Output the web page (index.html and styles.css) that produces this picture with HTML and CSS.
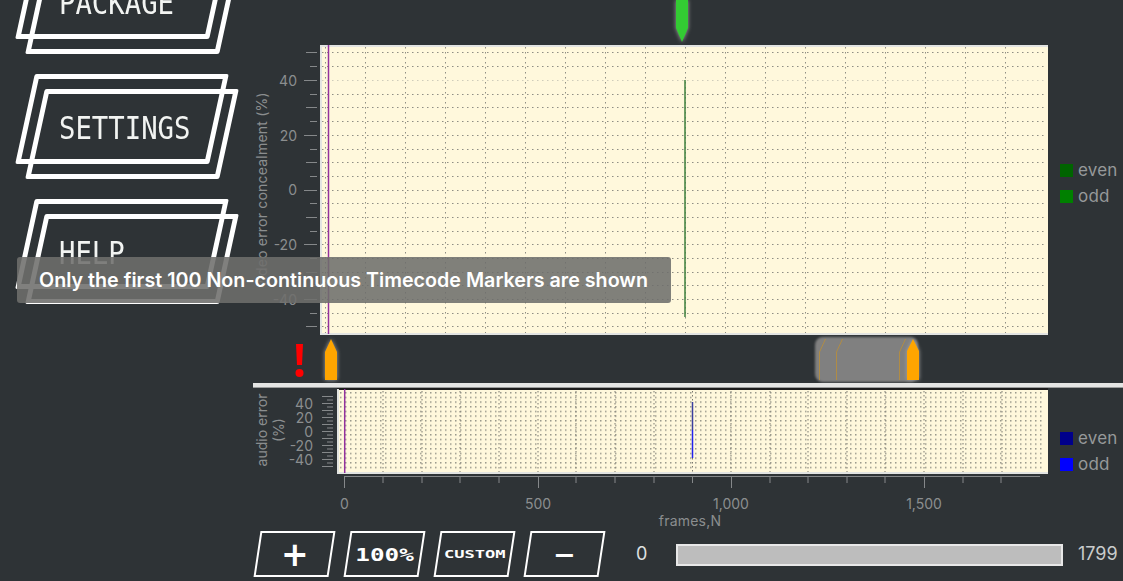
FILE: index.html
```html
<!DOCTYPE html>
<html lang="en">
<head>
    <meta charset="UTF-8">
    <title>Timecode analysis</title>
    <link rel="stylesheet" href="styles.css">
</head>
<body>
<div id="app">
    <div id="sidebar">
        <div class="nav-btn"><div class="frame frame-back"></div><div class="frame frame-front"></div><span class="nav-label">PACKAGE</span></div>
        <div class="nav-btn"><div class="frame frame-back"></div><div class="frame frame-front"></div><span class="nav-label">SETTINGS</span></div>
        <div class="nav-btn"><div class="frame frame-back"></div><div class="frame frame-front"></div><span class="nav-label">HELP</span></div>
    </div>
    <div id="main">
        <svg class="strip-top" viewBox="253 0 870 45" width="870" height="45">
            <polygon class="marker-green" points="676,0 688,0 688,28 682,42 676,28"/>
        </svg>
        <div class="chart-row chart-row-top">
            <svg class="chart" viewBox="253 45 795 290" width="795" height="290">
                <rect class="plot-bg" x="320" y="45" width="728" height="289"/>
                <path class="dots" d="M322 52.5H1044M322 66.5H1044M322 94.5H1044M322 107.5H1044M322 121.5H1044M322 135.5H1044M322 149.5H1044M322 162.5H1044M322 176.5H1044M322 190.5H1044M322 203.5H1044M322 217.5H1044M322 231.5H1044M322 244.5H1044M322 258.5H1044M322 272.5H1044M322 285.5H1044M322 299.5H1044M322 313.5H1044M322 326.5H1044"/>
                <path class="dots dots-light" d="M322 80.5H1044"/>
                <path class="dots" d="M325.5 47V334M365.5 47V334M405.5 47V334M445.5 47V334M485.5 47V334M525.5 47V334M565.5 47V334M605.5 47V334M645.5 47V334M685.5 47V334M725.5 47V334M765.5 47V334M805.5 47V334M845.5 47V334M885.5 47V334M925.5 47V334M965.5 47V334M1005.5 47V334"/>
                <path class="frame-line" d="M321 334V46H1048"/>
                <path class="frame-line" d="M320 334H1048"/>
                <path class="purple" d="M328.5 45V334"/>
                <path class="trace-green" d="M685 80V317"/>
                <path class="tick" d="M304 80.5H317M304 135.5H317M304 190.5H317M304 244.5H317M304 299.5H317M306 52.5H317M306 107.5H317M306 162.5H317M306 217.5H317M306 272.5H317M306 326.5H317M310 66.5H317M310 94.5H317M310 121.5H317M310 149.5H317M310 176.5H317M310 203.5H317M310 231.5H317M310 258.5H317M310 285.5H317M310 313.5H317"/>
                <text class="axis-text" x="297" y="86" text-anchor="end">40</text>
                <text class="axis-text" x="297" y="141" text-anchor="end">20</text>
                <text class="axis-text" x="297" y="195" text-anchor="end">0</text>
                <text class="axis-text" x="297" y="250" text-anchor="end">-20</text>
                <text class="axis-text" x="297" y="305" text-anchor="end">-40</text>
                <text class="axis-text axis-title" text-anchor="middle" transform="translate(267 190) rotate(-90)">video error concealment (%)</text>
            </svg>
            <div class="legend">
                <div class="legend-item"><i class="swatch swatch-even-green"></i>even</div>
                <div class="legend-item"><i class="swatch swatch-odd-green"></i>odd</div>
            </div>
        </div>
        <svg class="strip" viewBox="253 335 870 48" width="870" height="48">
            <polygon class="alert" points="296,344 303,344 302,365 297,365"/>
            <circle class="alert" cx="299.5" cy="373" r="4"/>
            <polygon class="marker-orange" points="325,380 325,352 331,339 337,352 337,380"/>
            <rect class="range" x="815" y="337" width="103" height="45" rx="8"/>
            <path class="range-line" d="M819.5 380V352L825.5 339M836.5 380V352L842.5 339M899.5 380V352L905.5 339"/>
            <polygon class="marker-orange" points="907,380 907,351 913,339 919,351 919,380"/>
        </svg>
        <div class="divider"></div>
        <div class="chart-row">
            <svg class="chart" viewBox="253 388 795 139" width="795" height="139">
                <defs>
                    <pattern id="dense" x="340" y="392" width="5" height="4.67" patternUnits="userSpaceOnUse">
                        <rect class="dense-dot" width="1.5" height="1.5"/>
                    </pattern>
                </defs>
                <rect class="plot-bg" x="337" y="388" width="711" height="85"/>
                <rect fill="url(#dense)" x="339" y="392" width="705" height="78"/>
                <path class="dots dots-dense" d="M383 391V472M422 391V472M460 391V472M499 391V472M538 391V472M576 391V472M615 391V472M654 391V472M692.5 391V402M692.5 458V472M731 391V472M770 391V472M808 391V472M847 391V472M885 391V472M924 391V472M963 391V472M1002 391V472"/>
                <path class="frame-dark" d="M337 389H1048"/>
                <path class="frame-line" d="M338 389V473H1048"/>
                <path class="purple" d="M344.7 389V473"/>
                <path class="trace-navy" d="M692.5 402V430"/>
                <path class="trace-blue" d="M692.5 430V458"/>
                <path class="tick" d="M322 396.5H333M322 403.5H333M322 410.5H333M322 417.5H333M322 424.5H333M322 431.5H333M322 438.5H333M322 445.5H333M322 452.5H333M322 459.5H333M322 466.5H333M327 400H333M327 407H333M327 414H333M327 421H333M327 428H333M327 435H333M327 442H333M327 449H333M327 456H333M327 463H333"/>
                <path class="tick" d="M344 476.5H1040M344.5 476V488M538.5 476V488M731.5 476V488M924.5 476V488M383 476V483M422 476V483M460 476V483M499 476V483M576 476V483M615 476V483M654 476V483M692.5 476V483M770 476V483M808 476V483M847 476V483M885 476V483M963 476V483M1001 476V483"/>
                <text class="axis-text" x="313" y="409" text-anchor="end">40</text>
                <text class="axis-text" x="313" y="423" text-anchor="end">20</text>
                <text class="axis-text" x="313" y="437" text-anchor="end">0</text>
                <text class="axis-text" x="313" y="451" text-anchor="end">-20</text>
                <text class="axis-text" x="313" y="465" text-anchor="end">-40</text>
                <text class="axis-text" text-anchor="middle" transform="translate(267 430) rotate(-90)">audio error</text>
                <text class="axis-text" text-anchor="middle" transform="translate(284 430) rotate(-90)">(%)</text>
                <text class="axis-text" x="344.5" y="509" text-anchor="middle">0</text>
                <text class="axis-text" x="538" y="509" text-anchor="middle">500</text>
                <text class="axis-text" x="731" y="509" text-anchor="middle">1,000</text>
                <text class="axis-text" x="924" y="509" text-anchor="middle">1,500</text>
                <text class="axis-text axis-title" x="690" y="526" text-anchor="middle">frames,N</text>
            </svg>
            <div class="legend legend-low">
                <div class="legend-item"><i class="swatch swatch-even-blue"></i>even</div>
                <div class="legend-item"><i class="swatch swatch-odd-blue"></i>odd</div>
            </div>
        </div>
        <div class="toolbar">
            <div class="zoom-btn"><span class="zoom-plus">+</span></div>
            <div class="zoom-btn"><span class="zoom-full">100%</span></div>
            <div class="zoom-btn"><span class="zoom-custom">CUSTOM</span></div>
            <div class="zoom-btn"><span class="zoom-minus">−</span></div>
            <span class="range-min">0</span>
            <div class="slider"></div>
            <span class="range-max">1799</span>
        </div>
    </div>
    <div id="toast">Only the first 100 Non-continuous Timecode Markers are shown</div>
</div>
</body>
</html>
```

FILE: styles.css
```css
*{
    margin: 0;
    padding: 0;
    box-sizing: border-box;
}
body{
    background-color: #2e3336;
    overflow: hidden;
    font-family: "Inter", "Liberation Sans", sans-serif;
}
#app{
    position: relative;
    display: flex;
    width: 1123px;
    height: 581px;
    overflow: hidden;
}
#sidebar{
    width: 253px;
    margin-top: -51px;
    flex-shrink: 0;
}
.nav-btn{
    display: grid;
    height: 125px;
}
.frame{
    grid-area: 1 / 1;
    width: 194px;
    height: 90px;
    border: 5.5px solid #fff;
    border-radius: 2px;
    transform: skewX(-12.3deg);
}
.frame-back{
    margin-left: 25px;
}
.frame-front{
    margin-left: 35px;
    margin-top: 15px;
}
.nav-label{
    grid-area: 1 / 1;
    margin-left: 59px;
    margin-top: 40px;
    height: 30px;
    line-height: 30px;
    font-family: "DejaVu Sans Mono", monospace;
    font-size: 27.3px;
    color: #f2f4f2;
    transform: scaleY(1.14);
}
#main{
    display: flex;
    flex-direction: column;
    width: 870px;
}
svg{
    display: block;
    overflow: visible;
}
.strip-top,.strip{
    flex-shrink: 0;
}
.marker-green{
    fill: #33cc33;
    filter: drop-shadow(0 0 2px #a0a0a0);
}
.marker-orange{
    fill: #ffa500;
    filter: drop-shadow(0 0 2px #a0a0a0);
}
.alert{
    fill: #ff0000;
}
.range{
    fill: #808080;
    filter: blur(1px);
}
.range-line{
    fill: none;
    stroke: #b08c45;
    stroke-width: 1;
}
.chart-row{
    display: flex;
    flex-shrink: 0;
}
.plot-bg{
    fill: #fff8dc;
}
.dots{
    fill: none;
    stroke: #8f8e84;
    stroke-width: 1;
    stroke-dasharray: 1.5 3.5;
}
.dots-light{
    stroke: #cfccba;
}
.dots-dense{
    stroke: #7a7970;
    stroke-dasharray: 1.5 2.5;
}
.dense-dot{
    fill: #9a998c;
}
.frame-line{
    fill: none;
    stroke: #e2e4e2;
    stroke-width: 2;
}
.frame-dark{
    fill: none;
    stroke: #1c1c1c;
    stroke-width: 2;
}
.purple{
    fill: none;
    stroke: #93309d;
    stroke-width: 1.5;
}
.trace-green{
    fill: none;
    stroke: #3d7f3d;
    stroke-width: 1.5;
}
.trace-navy{
    fill: none;
    stroke: #3a3f9e;
    stroke-width: 1.5;
}
.trace-blue{
    fill: none;
    stroke: #2222ee;
    stroke-width: 1.5;
}
.tick{
    fill: none;
    stroke: #85888a;
    stroke-width: 1;
}
.axis-text{
    fill: #8b8e8f;
    font-size: 14px;
}
.axis-title{
    letter-spacing: 0.2px;
}
.legend{
    margin-left: 12px;
    margin-top: 112px;
}
.legend-low{
    margin-top: 37px;
}
.legend-item{
    display: flex;
    align-items: center;
    gap: 5px;
    height: 26px;
    font-size: 17px;
    letter-spacing: 0.2px;
    color: #96999a;
}
.swatch{
    width: 13px;
    height: 13px;
}
.swatch-even-green{
    background-color: #006400;
}
.swatch-odd-green{
    background-color: #008000;
}
.swatch-even-blue{
    background-color: #00008b;
}
.swatch-odd-blue{
    background-color: #0000ff;
}
.divider{
    height: 5px;
    background-color: #e4e5e4;
    border-bottom: 1px solid #9a9c9c;
    flex-shrink: 0;
}
.toolbar{
    display: flex;
    align-items: flex-start;
    padding: 4px 0 0 3.5px;
}
.zoom-btn{
    display: flex;
    align-items: center;
    justify-content: center;
    flex-shrink: 0;
    width: 75px;
    height: 46px;
    margin-right: 15px;
    border: 2.5px solid #fff;
    transform: skewX(-8.6deg);
    color: #fff;
}
.zoom-plus{
    font-family: "DejaVu Sans", sans-serif;
    font-weight: bold;
    font-size: 33px;
    transform: skewX(8.6deg);
}
.zoom-minus{
    font-family: "DejaVu Sans", sans-serif;
    font-size: 27px;
    font-weight: bold;
    transform: skewX(8.6deg);
}
.zoom-full{
    font-family: "DejaVu Sans Mono", monospace;
    font-weight: bold;
    font-size: 18px;
    transform: skewX(8.6deg) scaleX(1.35);
}
.zoom-custom{
    font-family: "DejaVu Sans Mono", monospace;
    font-weight: bold;
    font-size: 11px;
    transform: skewX(8.6deg) scaleX(1.55);
}
.range-min{
    margin-left: 19.5px;
    width: 40px;
    flex-shrink: 0;
    line-height: 46px;
    font-size: 18px;
    color: #dfe1e1;
}
.range-max{
    margin-left: 15px;
    line-height: 46px;
    font-size: 18px;
    color: #c9cccc;
}
.slider{
    flex-shrink: 0;
    width: 387px;
    height: 22px;
    margin-top: 13px;
    background-color: #bdbdbd;
    border: 2px solid #e8e8e8;
}
#toast{
    position: absolute;
    left: 17px;
    top: 257px;
    width: 654px;
    height: 46px;
    padding-left: 22px;
    line-height: 46px;
    border-radius: 3px;
    background-color: rgba(110, 110, 108, 0.88);
    color: #fff;
    font-size: 19.7px;
    font-weight: 600;
    white-space: nowrap;
}
```
